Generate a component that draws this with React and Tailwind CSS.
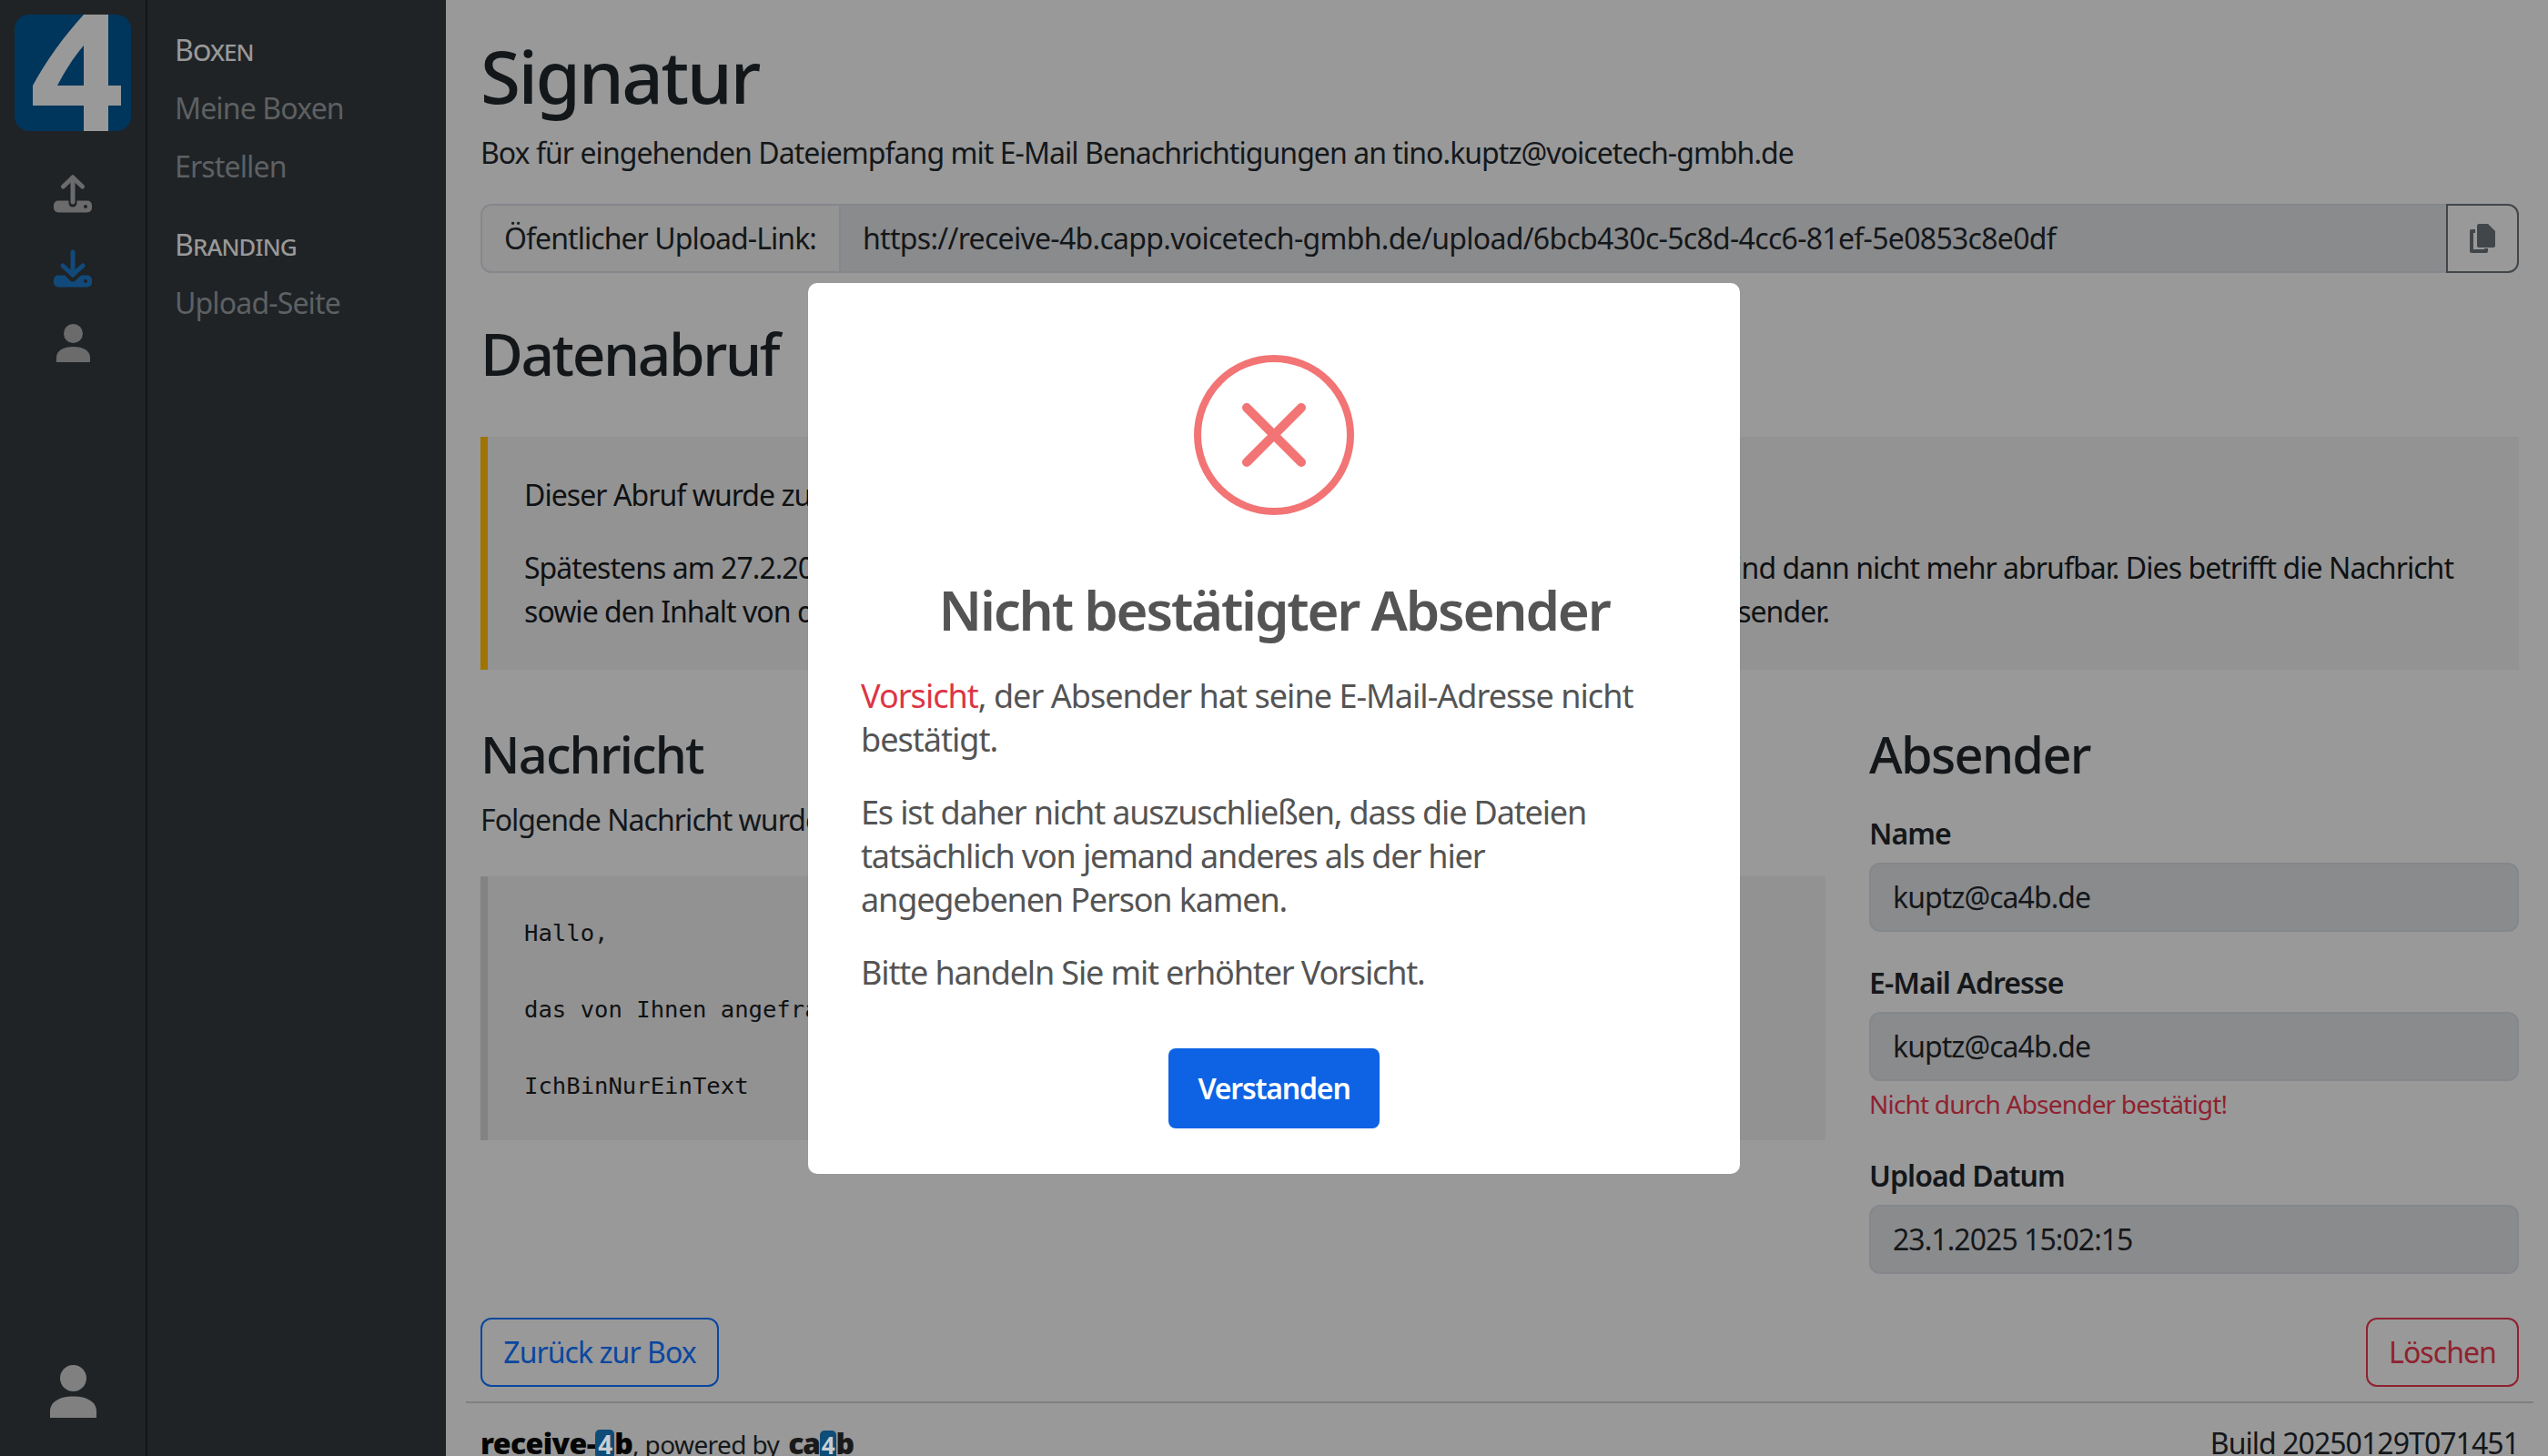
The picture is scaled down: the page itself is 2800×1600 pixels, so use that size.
const FONT = "font-['Noto_Sans','Open_Sans',sans-serif]";

function Logo() {
  return (
    <div className="w-[128px] h-[128px] rounded-[16px] bg-[#00355c] overflow-hidden shrink-0">
      <svg viewBox="16 16 128 128" className="w-[128px] h-[128px] block">
        <path
          fillRule="evenodd"
          fill="#999999"
          d="M92 16H119V94H133V116H119V144H92V116H36V94C50 68 70 40 92 16ZM92 50C80 64 71 79 63 94H92Z"
        />
      </svg>
    </div>
  );
}

function TrayIcon({ color, down }) {
  return (
    <svg viewBox="0 0 42 42" className="w-[42px] h-[42px] block">
      <rect x="0" y="28.5" width="42" height="13" rx="5" fill={color} />
      <circle cx="35" cy="35" r="2" fill="#1f2326" />
      {down ? (
        <g fill="none" stroke={color} strokeLinecap="round" strokeLinejoin="round">
          <path d="M9 19L21 31L33 19" strokeWidth="9" stroke="#1f2326" />
          <path d="M21 3V27" strokeWidth="5" />
          <path d="M10 18L21 28" strokeWidth="5" />
          <path d="M32 18L21 28" strokeWidth="5" />
        </g>
      ) : (
        <g fill="none" stroke={color} strokeLinecap="round" strokeLinejoin="round">
          <path d="M21 3V31" strokeWidth="9" stroke="#1f2326" />
          <path d="M21 3V30" strokeWidth="5" />
          <path d="M10.5 13L21 3L31.5 13" strokeWidth="5" />
        </g>
      )}
    </svg>
  );
}

function PersonIcon({ className, color }) {
  return (
    <svg viewBox="0 0 37 42" className={className}>
      <circle cx="18.5" cy="10.5" r="10.5" fill={color} />
      <path d="M0 42V37C0 29 8 25 18.5 25S37 29 37 37V42Z" fill={color} />
    </svg>
  );
}

function CopyIcon() {
  return (
    <svg viewBox="0 0 28 32" className="w-[28px] h-[32px] block">
      <path d="M10 0H20L28 8V24C28 25 27 26 26 26H10C9 26 8 25 8 24V2C8 1 9 0 10 0Z" fill="#41464a" />
      <path d="M6 8H2V30H18V27" fill="none" stroke="#41464a" strokeWidth="4" strokeLinejoin="round" />
    </svg>
  );
}

function Field({ label, value, children, className = "" }) {
  return (
    <div className={className}>
      <div className="text-[32px] leading-[48px] font-semibold mb-2 tracking-[-0.95px]">{label}</div>
      <div className="h-[76px] rounded-[12px] border-2 border-[#84878b] bg-[#8a8b8d] px-6 flex items-center text-[32px] leading-[48px] tracking-[-0.95px]">
        {value}
      </div>
      {children}
    </div>
  );
}

export default function App() {
  return (
    <div className={`relative w-[2800px] h-[1600px] overflow-hidden flex bg-[#999999] text-[#14171a] ${FONT}`}>
      <aside className="w-[162px] shrink-0 bg-[#1f2326] border-r-2 border-[#131517] flex flex-col items-center pt-4 pb-[42px]">
        <Logo />
        <div className="mt-[48px] flex flex-col items-center gap-[40px]">
          <TrayIcon color="#6b6b6b" />
          <TrayIcon color="#114a7a" down />
          <PersonIcon className="w-[37px] h-[42px] block" color="#6b6b6b" />
        </div>
        <div className="mt-auto">
          <PersonIcon className="w-[51px] h-[58px] block" color="#808080" />
        </div>
      </aside>

      <nav className="w-[328px] shrink-0 bg-[#1f2326] pl-[30px] pt-[31px] text-[32px] leading-[48px] tracking-[-0.85px]">
        <div className="text-[#999999] [font-variant:small-caps]">Boxen</div>
        <div className="text-[#5e6062] mt-4">Meine Boxen</div>
        <div className="text-[#5e6062] mt-4">Erstellen</div>
        <div className="text-[#999999] [font-variant:small-caps] mt-[38px]">Branding</div>
        <div className="text-[#5e6062] mt-4">Upload-Seite</div>
      </nav>

      <main className="flex-1 min-w-0 pt-10 pl-[22px] pr-4 flex flex-col">
        <div className="px-4">
          <h1 className="text-[80px] leading-[86px] font-medium mb-[18px] tracking-[-2.5px]">Signatur</h1>
          <p className="text-[32px] leading-[48px] mb-8 tracking-[-0.95px]">
            Box für eingehenden Dateiempfang mit E-Mail Benachrichtigungen an tino.kuptz@voicetech-gmbh.de
          </p>

          <div className="flex h-[76px] text-[32px] leading-[48px] tracking-[-0.95px]">
            <div className="w-[396px] shrink-0 rounded-l-[12px] border-2 border-[#84878b] bg-[#949494] pl-6 flex items-center">
              Öfentlicher Upload-Link:
            </div>
            <div className="flex-1 min-w-0 border-y-2 border-[#84878b] bg-[#8a8b8d] pl-6 flex items-center tracking-[-0.7px]">
              https://receive-4b.capp.voicetech-gmbh.de/upload/6bcb430c-5c8d-4cc6-81ef-5e0853c8e0df
            </div>
            <div className="w-[80px] shrink-0 rounded-r-[12px] border-2 border-[#41464a] flex items-center justify-center">
              <CopyIcon />
            </div>
          </div>

          <h2 className="mt-[50px] text-[64px] leading-[77px] font-medium mb-[53px] tracking-[-2.4px]">Datenabruf</h2>

          <div className="border-l-8 border-[#a07400] bg-[#939393] pl-10 pr-10 py-10 text-[32px] leading-[48px] tracking-[-0.95px] text-[#0f1113]">
            <p className="mb-8">Dieser Abruf wurde zuletzt durch Sie selbst gestartet.</p>
            <p>
              Spätestens am 27.2.2025 werden alle Daten dieses Abrufs von uns automatisch gelöscht und sind dann nicht mehr abrufbar. Dies betrifft die Nachricht sowie den Inhalt von der hochgeladenen Datei, aber auch die hier getätigten Angaben zum Absender.
            </p>
          </div>

          <div className="mt-16 grid grid-cols-[1478px_714px] gap-x-12">
            <div>
              <h3 className="text-[56px] leading-[57px] font-medium mb-5 tracking-[-1.8px]">Nachricht</h3>
              <p className="text-[32px] leading-[48px] mb-[38px] tracking-[-0.95px]">Folgende Nachricht wurde mit dem Abruf übermittelt:</p>
              <pre className="border-l-8 border-[#838383] bg-[#929292] pl-10 pt-[41px] pb-[39px] text-[25.6px] leading-[42px] font-['DejaVu_Sans_Mono',monospace] text-[#0f1113]">
                {"Hallo,\n\ndas von Ihnen angefragte Dokument finden Sie anbei.\n\nIchBinNurEinText"}
              </pre>
            </div>
            <div>
              <h3 className="text-[56px] leading-[57px] font-medium mb-[35px] tracking-[-1.7px]">Absender</h3>
              <Field label="Name" value="kuptz@ca4b.de" />
              <Field label="E-Mail Adresse" value="kuptz@ca4b.de" className="mt-8">
                <div className="mt-1 text-[28px] leading-[42px] text-[#8f2230] tracking-[-0.8px]">Nicht durch Absender bestätigt!</div>
              </Field>
              <Field label="Upload Datum" value="23.1.2025 15:02:15" className="mt-[34px]" />
            </div>
          </div>

          <div className="mt-12 flex justify-between text-[32px] leading-[48px] tracking-[-0.95px]">
            <div className="h-[76px] w-[262px] rounded-[12px] border-2 border-[#0a47a0] text-[#0a47a0] flex items-center justify-center">Zurück zur Box</div>
            <div className="h-[76px] w-[168px] rounded-[12px] border-2 border-[#8f2230] text-[#8f2230] flex items-center justify-center">Löschen</div>
          </div>
        </div>

        <div className="mt-[16px] border-t-2 border-[#808080] px-4 pt-[20px] flex justify-between text-[32px] leading-[48px] tracking-[-0.95px]">
          <div className="flex items-baseline">
            <span className="font-black text-[#050505] tracking-[-0.6px]">receive-</span>
            <span className="font-bold text-[#c9ced2] bg-[#0f4c78] rounded-[5px] px-[3px] leading-[32px] text-[28px]">4</span>
            <span className="font-black text-[#050505]">b</span>
            <span className="text-[28px] tracking-[-0.6px]">, powered by</span>
            <span className="ml-[10px] font-black tracking-[-1.4px] text-[#1a1a1a]">ca</span>
            <span className="font-bold text-[#c9ced2] bg-[#0f4c78] rounded-[5px] px-[2px] leading-[32px] text-[26px]">4</span>
            <span className="font-black text-[#1a1a1a]">b</span>
          </div>
          <div>Build 20250129T071451</div>
        </div>
      </main>

      <div className="absolute inset-0 flex items-center justify-center pointer-events-none">
        <div className="w-[1024px] h-[979px] rounded-[10px] bg-white pt-[79px] px-[58px] text-[#545454] flex flex-col">
          <div className="self-center w-[176px] h-[176px] rounded-full border-[8px] border-[#f27474] flex items-center justify-center">
            <svg viewBox="0 0 70 70" className="w-[70px] h-[70px] block">
              <path d="M5 5L65 65M65 5L5 65" stroke="#f27474" strokeWidth="10" strokeLinecap="round" />
            </svg>
          </div>
          <h2 className="mt-[64px] text-center text-[60px] leading-[80px] font-semibold tracking-[-2.2px]">Nicht bestätigter Absender</h2>
          <div className="mt-[31px] text-[36px] leading-[48px] tracking-[-1.15px]">
            <p className="mb-8 tracking-[-0.97px]"><span className="text-[#dc3545]">Vorsicht</span>, der Absender hat seine E-Mail-Adresse nicht bestätigt.</p>
            <p className="mb-8">Es ist daher nicht auszuschließen, dass die Dateien tatsächlich von jemand anderes als der hier angegebenen Person kamen.</p>
            <p>Bitte handeln Sie mit erhöhter Vorsicht.</p>
          </div>
          <div className="mt-[59px] self-center w-[232px] h-[88px] rounded-[8px] bg-[#0d63e4] text-white font-semibold flex items-center justify-center text-[32px] tracking-[-1.2px]">Verstanden</div>
        </div>
      </div>
    </div>
  );
}
